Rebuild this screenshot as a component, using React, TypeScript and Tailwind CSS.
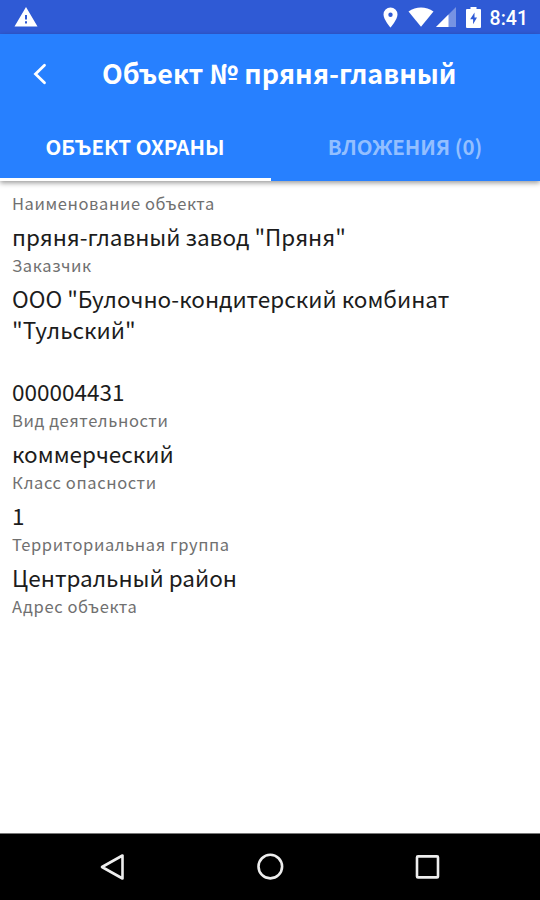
interface Field {
  label: string
  value?: string
}

const fields: Field[] = [
  { label: 'Наименование объекта', value: 'пряня-главный завод "Пряня"' },
  { label: 'Заказчик', value: 'ООО "Булочно-кондитерский комбинат\n"Тульский"\n\n000004431' },
  { label: 'Вид деятельности', value: 'коммерческий' },
  { label: 'Класс опасности', value: '1' },
  { label: 'Территориальная группа', value: 'Центральный район' },
  { label: 'Адрес объекта' }
]

function StatusBar() {
  return (
    <div className="flex h-[34px] shrink-0 items-center bg-[#2f5ad5] pr-[12px] pl-[14px] text-white">
      <svg width="24" height="22" viewBox="0 0 24 22" fill="currentColor">
        <path fillRule="evenodd" d="M12 1 23.5 20.5H.5Zm-1 8v4.5h2V9Zm0 6.3v2.2h2v-2.2Z" />
      </svg>
      <svg className="ml-auto" width="15" height="21" viewBox="0 0 15 21" fill="currentColor">
        <path fillRule="evenodd" d="M7.5.5a7 7 0 0 0-7 7c0 5 7 13 7 13s7-8 7-13a7 7 0 0 0-7-7Zm0 5a2.2 2.2 0 1 1 0 4.4 2.2 2.2 0 0 1 0-4.4Z" />
      </svg>
      <svg className="ml-[10px]" width="26" height="20" viewBox="0 0 26 20" fill="currentColor">
        <path d="M13 19.8.5 4.5C8-1 18-1 25.5 4.5Z" />
      </svg>
      <svg className="ml-[2px]" width="20" height="20" viewBox="0 0 20 20" fill="currentColor">
        <path d="M20 0v20H0Z" opacity=".35" />
        <path d="M12.5 7.5V20H0Z" />
      </svg>
      <svg className="ml-[10px]" width="15" height="21" viewBox="0 0 15 21" fill="currentColor">
        <path fillRule="evenodd" d="M4.5 0h6v2H14a1 1 0 0 1 1 1v17a1 1 0 0 1-1 1H1a1 1 0 0 1-1-1V3a1 1 0 0 1 1-1h3.5Zm4 5.5L4.2 12.3h2.9v5l3.9-6.8H8.5Z" />
      </svg>
      <span className="ml-[9px] pt-[3px] font-['Roboto',sans-serif] text-[19.5px] leading-none font-medium">8:41</span>
    </div>
  )
}

function Header() {
  return (
    <header className="relative h-[147px] shrink-0 bg-[#2780ff] text-white shadow-[0_2px_5px_rgba(0,0,0,0.4)]">
      <div className="flex h-[80px] items-center">
        <svg className="ml-[32px]" width="16" height="22" viewBox="0 0 16 22" fill="none" stroke="currentColor" strokeWidth="2.8" strokeLinecap="round">
          <path d="M12.5 2.2 3.5 11l9 8.8" />
        </svg>
        <h1 className="-mt-[2px] ml-[54px] text-[26.9px] font-bold whitespace-nowrap">Объект № пряня-главный</h1>
      </div>
      <nav className="grid h-[67px] grid-cols-2 text-center text-[20.5px] font-bold whitespace-nowrap">
        <div className="-mr-px h-[67px] border-b-[3px] border-white pr-px leading-[64px]">ОБЪЕКТ ОХРАНЫ</div>
        <div className="leading-[64px] text-[#93bfff]">ВЛОЖЕНИЯ (0)</div>
      </nav>
    </header>
  )
}

function NavigationBar() {
  return (
    <div className="grid h-[67px] shrink-0 grid-cols-3 items-center border-t border-[#777] bg-black px-[34px] text-[#eee]">
      <svg className="mx-auto" width="30" height="30" viewBox="0 0 30 30" fill="none" stroke="currentColor" strokeWidth="2.6" strokeLinejoin="round">
        <path d="M24.5 3.5v23L4 15Z" />
      </svg>
      <svg className="mx-auto" width="30" height="30" viewBox="0 0 30 30" fill="none" stroke="currentColor" strokeWidth="2.6">
        <circle cx="15.3" cy="14.6" r="11.8" />
      </svg>
      <svg className="mx-auto" width="30" height="30" viewBox="0 0 30 30" fill="none" stroke="currentColor" strokeWidth="2.6">
        <rect x="5" y="4.4" width="21" height="21" rx="1" />
      </svg>
    </div>
  )
}

export default function App() {
  return (
    <div className="flex h-[900px] w-[540px] flex-col overflow-hidden bg-white font-['Noto_Sans_CJK_SC','Noto_Sans',sans-serif]">
      <StatusBar />
      <Header />
      <main className="flex-1 px-[12px] pt-[9px]">
        {fields.map(field => (
          <div key={field.label}>
            <div className="h-[31px] text-[16.5px] leading-[26px] tracking-[0.6px] text-[#707070]">{field.label}</div>
            {field.value && <div className="text-[22.5px] leading-[31px] whitespace-pre-line text-[#1c1c1c]">{field.value}</div>}
          </div>
        ))}
      </main>
      <NavigationBar />
    </div>
  )
}
